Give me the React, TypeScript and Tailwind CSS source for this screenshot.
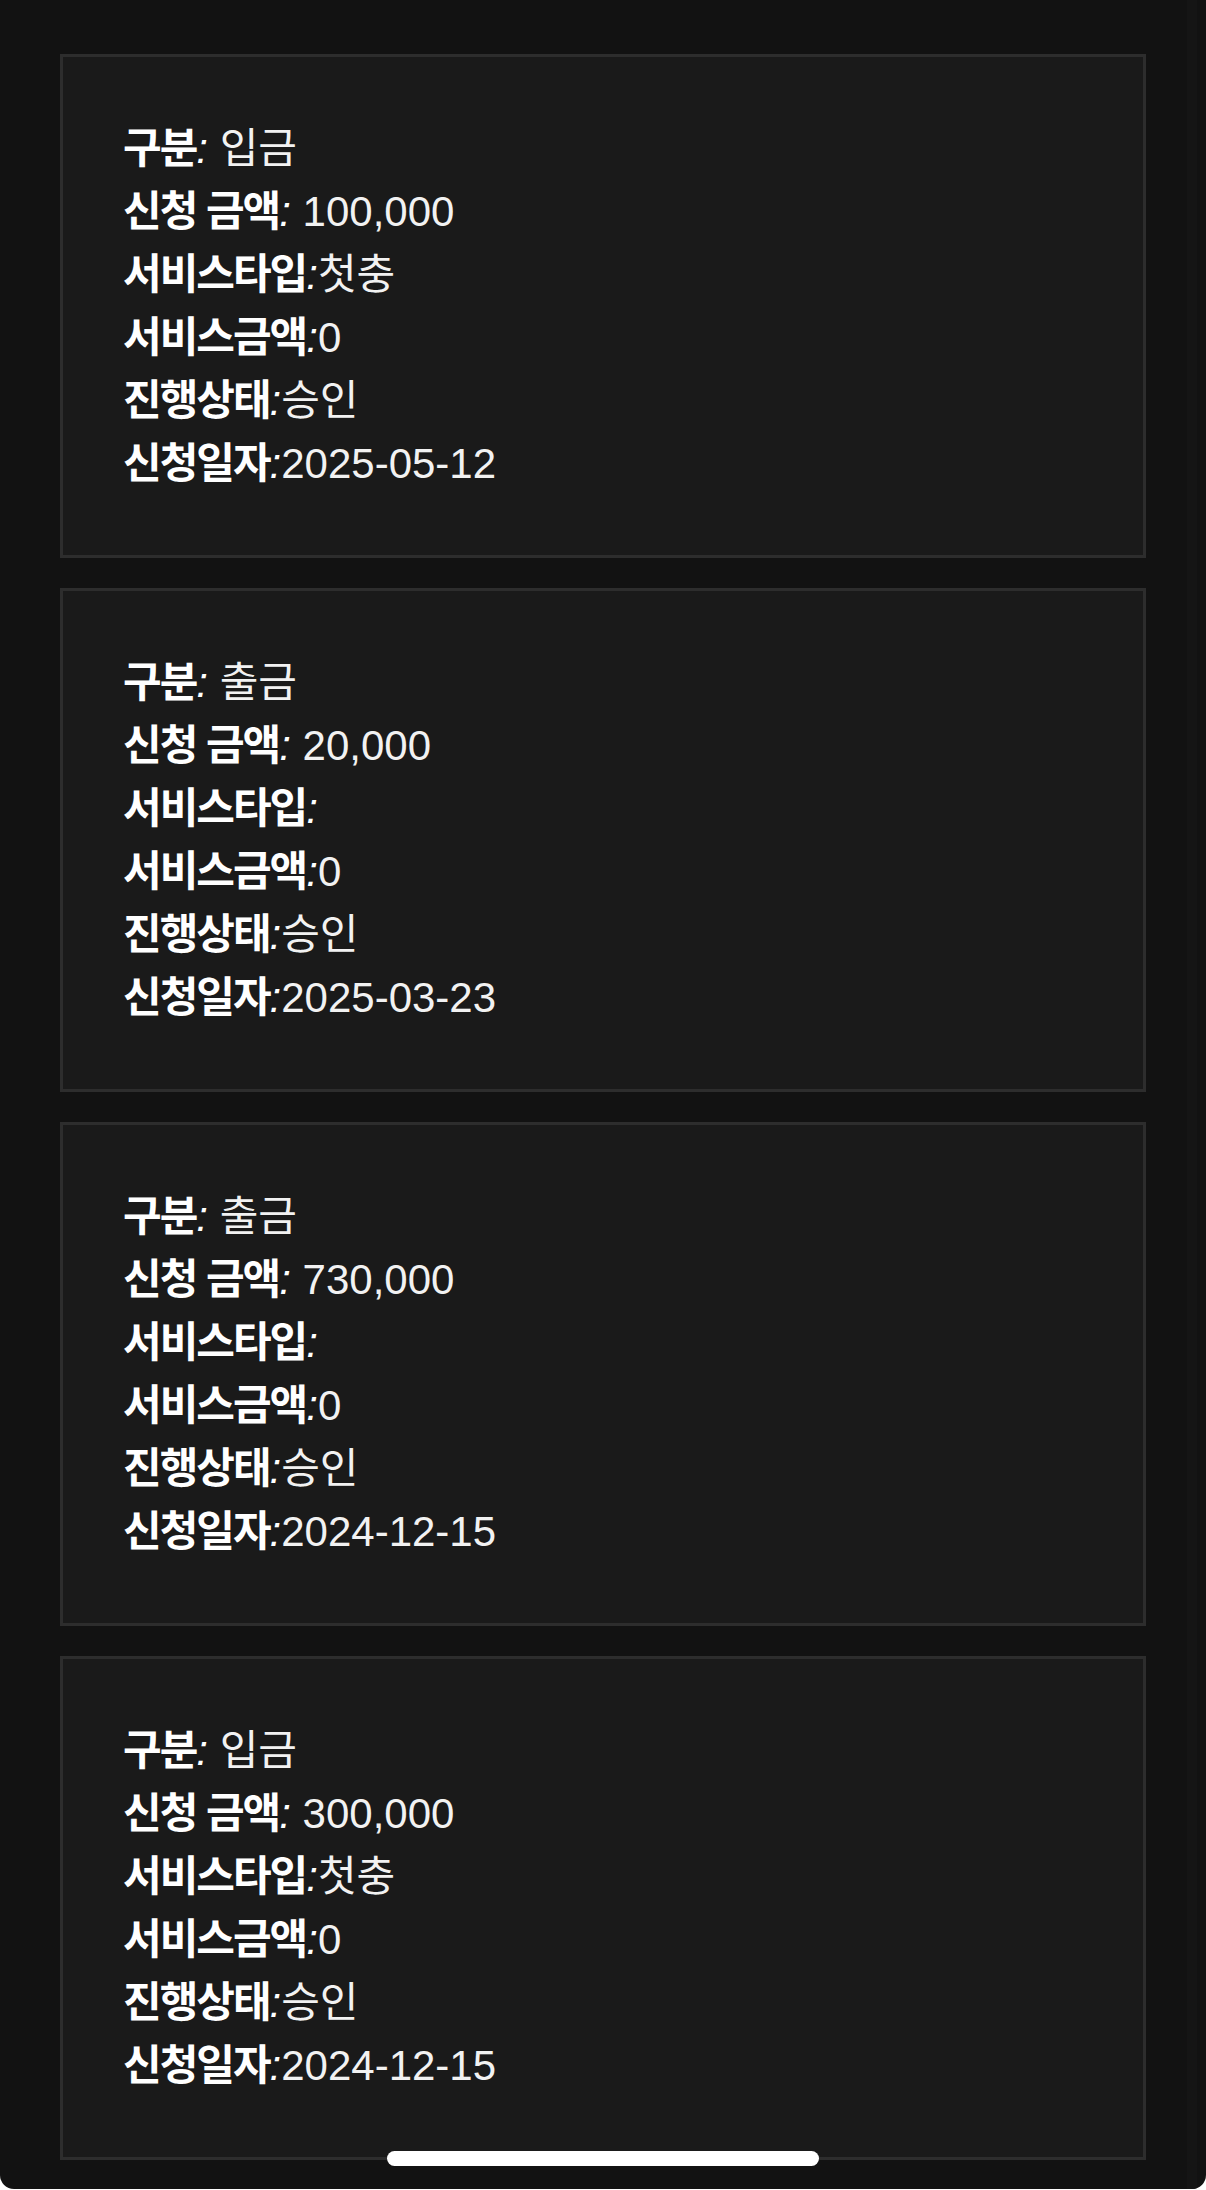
import React from 'react'

// ─── data ─────────────────────────────────────────────────────────────────────

type Row = { label: string; value: string; spaced?: boolean }

const ITEMS: Row[][] = [
  [
    { label: '구분', value: '입금', spaced: true },
    { label: '신청 금액', value: '100,000', spaced: true },
    { label: '서비스타입', value: '첫충' },
    { label: '서비스금액', value: '0' },
    { label: '진행상태', value: '승인' },
    { label: '신청일자', value: '2025-05-12' },
  ],
  [
    { label: '구분', value: '출금', spaced: true },
    { label: '신청 금액', value: '20,000', spaced: true },
    { label: '서비스타입', value: '' },
    { label: '서비스금액', value: '0' },
    { label: '진행상태', value: '승인' },
    { label: '신청일자', value: '2025-03-23' },
  ],
  [
    { label: '구분', value: '출금', spaced: true },
    { label: '신청 금액', value: '730,000', spaced: true },
    { label: '서비스타입', value: '' },
    { label: '서비스금액', value: '0' },
    { label: '진행상태', value: '승인' },
    { label: '신청일자', value: '2024-12-15' },
  ],
  [
    { label: '구분', value: '입금', spaced: true },
    { label: '신청 금액', value: '300,000', spaced: true },
    { label: '서비스타입', value: '첫충' },
    { label: '서비스금액', value: '0' },
    { label: '진행상태', value: '승인' },
    { label: '신청일자', value: '2024-12-15' },
  ],
]

// ─── Component ────────────────────────────────────────────────────────────────

export default function App() {
  return (
    <div className="bg-white w-[1206px] h-[2190px]">
      <div
        className="relative h-[2189px] bg-[#121212] rounded-b-[14px] overflow-hidden pt-[54px] px-[60px] text-white"
        style={{ fontFamily: '"Liberation Sans", "Noto Sans CJK KR", sans-serif' }}
      >
        {/* faint scrollbar track */}
        <div className="absolute top-0 right-[9px] w-[10px] h-full bg-[#151515]" />

        <div className="relative flex flex-col gap-[30px]">
          {ITEMS.map((rows, i) => (
            <div
              key={i}
              className="w-[1086px] h-[504px] border-[3px] border-[#2d2d2d] bg-[#1a1a1a] p-[60px]"
            >
              {rows.map(r => (
                <p key={r.label} className="text-[42px] leading-[63px] whitespace-pre">
                  <span className="font-bold tracking-[-2px]">{r.label}</span>
                  <span className="italic">{r.spaced ? ': ' : ':'}</span>
                  <span className="text-[#f2f2f2]">{r.value}</span>
                </p>
              ))}
            </div>
          ))}
        </div>

        {/* home indicator */}
        <div className="absolute left-[387px] top-[2151px] w-[432px] h-[15px] rounded-full bg-white" />
      </div>
    </div>
  )
}
